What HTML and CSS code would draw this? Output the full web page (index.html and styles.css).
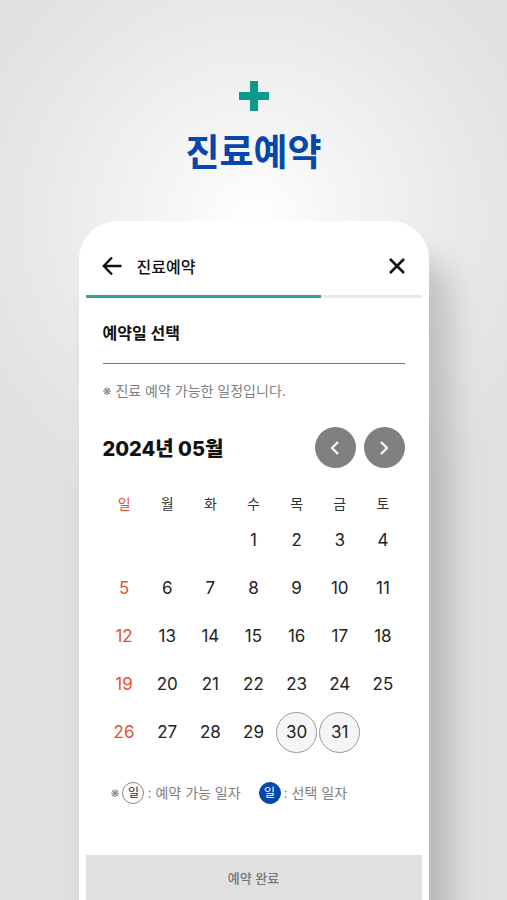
FILE: index.html
```
<!DOCTYPE html>
<html lang="ko">
<head>
  <meta charset="utf-8">
  <meta name="viewport" content="width=device-width, initial-scale=1">
  <title>진료예약</title>
  <link rel="stylesheet" href="styles.css">
</head>
<body>
  <div class="page">
    <header class="hero">
      <svg class="hero-icon" viewBox="0 0 30 30" aria-hidden="true">
        <path d="M11 0h8v11h11v8H19v11h-8V19H0v-8h11z" fill="#0a9b8e"/>
      </svg>
      <h1 class="hero-title">진료예약</h1>
    </header>

    <main class="phone">
      <div class="topbar">
        <button class="icon-btn" type="button" aria-label="뒤로">
          <svg width="20" height="20" viewBox="0 0 20 20" fill="none" stroke="#111" stroke-width="2.4">
            <path d="M19.5 10H2M10 1.5L1.8 10l8.2 8.5"/>
          </svg>
        </button>
        <h2 class="topbar-title">진료예약</h2>
        <button class="icon-btn" type="button" aria-label="닫기">
          <svg width="16" height="16" viewBox="0 0 16 16" fill="none" stroke="#111" stroke-width="2.6">
            <path d="M1 1l14 14M15 1L1 15"/>
          </svg>
        </button>
      </div>
      <div class="progress"><div class="progress-bar" style="width: 70%"></div></div>

      <section class="content">
        <h3 class="section-title">예약일 선택</h3>
        <p class="note">※ 진료 예약 가능한 일정입니다.</p>

        <div class="month">
          <h3 class="month-title">2024년 05월</h3>
          <button class="month-btn" type="button" aria-label="이전 달">
            <svg width="14" height="14" viewBox="0 0 14 14" fill="none" stroke="#fff" stroke-width="2.2">
              <path d="M10 1L4 7l6 6"/>
            </svg>
          </button>
          <button class="month-btn" type="button" aria-label="다음 달">
            <svg width="14" height="14" viewBox="0 0 14 14" fill="none" stroke="#fff" stroke-width="2.2">
              <path d="M4 1l6 6-6 6"/>
            </svg>
          </button>
        </div>

        <table class="calendar">
          <thead>
            <tr><th>일</th><th>월</th><th>화</th><th>수</th><th>목</th><th>금</th><th>토</th></tr>
          </thead>
          <tbody>
            <tr><td></td><td></td><td></td><td>1</td><td>2</td><td>3</td><td>4</td></tr>
            <tr><td>5</td><td>6</td><td>7</td><td>8</td><td>9</td><td>10</td><td>11</td></tr>
            <tr><td>12</td><td>13</td><td>14</td><td>15</td><td>16</td><td>17</td><td>18</td></tr>
            <tr><td>19</td><td>20</td><td>21</td><td>22</td><td>23</td><td>24</td><td>25</td></tr>
            <tr>
              <td>26</td><td>27</td><td>28</td><td>29</td>
              <td><button class="day" type="button">30</button></td>
              <td><button class="day" type="button">31</button></td>
              <td></td>
            </tr>
          </tbody>
        </table>

        <div class="legend">
          <span class="legend-item">※ <span class="dot">일</span> : 예약 가능 일자</span>
          <span class="legend-item"><span class="dot dot-selected">일</span> : 선택 일자</span>
        </div>
      </section>

      <button class="submit" type="button" disabled>예약 완료</button>
    </main>
  </div>
</body>
</html>
```
FILE: styles.css
```
* {
  box-sizing: border-box;
}
body {
  margin: 0;
  font-family: Inter, "Noto Sans CJK KR", sans-serif;
  color: #111;
}
h1, h2, h3, p {
  margin: 0;
}
button {
  padding: 0;
  border: none;
  font-family: inherit;
  cursor: pointer;
}
.page {
  display: flex;
  flex-direction: column;
  min-height: 100vh;
  overflow: hidden;
  background: radial-gradient(circle at 50% 220px, #fff 0, #f7f7f7 70px, #efefef 150px, #e8e8e8 220px, #e0e0e0 320px);
}

/* Hero */
.hero {
  display: flex;
  flex-direction: column;
  align-items: center;
  gap: 14px;
  padding: 81px 20px 40px;
}
.hero-icon {
  width: 30px;
  height: 30px;
}
.hero-title {
  font-size: 37px;
  line-height: 56px;
  font-weight: 700;
  color: #0647a9;
}

/* Phone */
.phone {
  display: flex;
  flex-direction: column;
  flex: 1;
  width: calc(100% - 40px);
  max-width: 350px;
  margin: 0 auto;
  padding: 0 7px;
  background: #fff;
  border-radius: 38px 38px 0 0;
  box-shadow: 22px 36px 32px rgba(0, 0, 0, 0.18);
}
.topbar {
  display: flex;
  align-items: center;
  padding: 16px 17px 0 16px;
  height: 74px;
}
.topbar-title {
  flex: 1;
  padding-left: 15px;
  font-size: 16px;
  font-weight: 500;
}
.icon-btn {
  display: flex;
  background: none;
}
.progress {
  height: 3px;
  background: #e9e9e9;
}
.progress-bar {
  height: 3px;
  background: #35a39b;
}
.content {
  padding: 0 17px;
}
.section-title {
  padding: 23px 0 18px;
  border-bottom: 1px solid #777;
  font-size: 16px;
  line-height: 24px;
  font-weight: 700;
}
.note {
  padding: 15px 0;
  font-size: 14px;
  line-height: 24px;
  color: #808080;
}

/* Calendar */
.month {
  display: flex;
  align-items: center;
  gap: 8px;
  padding-top: 9px;
}
.month-title {
  flex: 1;
  font-size: 20px;
  font-weight: 800;
}
.month-btn {
  display: flex;
  align-items: center;
  justify-content: center;
  width: 41px;
  height: 41px;
  border-radius: 50%;
  background: #808080;
}
.calendar {
  width: 100%;
  margin-top: 24px;
  border-collapse: collapse;
  table-layout: fixed;
  text-align: center;
}
.calendar th {
  height: 24px;
  padding: 0;
  font-size: 14px;
  line-height: 24px;
  font-weight: 400;
  color: #333;
}
.calendar td {
  height: 48px;
  padding: 0;
  font-size: 17px;
  color: #222;
}
.calendar th:first-child,
.calendar td:first-child {
  color: #e8502f;
}
.day {
  width: 41px;
  height: 41px;
  border: 1px solid #999;
  border-radius: 50%;
  background: #f5f5f5;
  font-size: 17px;
  color: #222;
}
.legend {
  display: flex;
  gap: 18px;
  padding: 26px 8px;
  font-size: 14px;
  line-height: 22px;
  color: #808080;
  white-space: nowrap;
}
.legend-item {
  display: flex;
  align-items: center;
  gap: 3px;
}
.dot {
  display: flex;
  align-items: center;
  justify-content: center;
  width: 22px;
  height: 22px;
  border: 1px solid #888;
  border-radius: 50%;
  font-size: 12px;
  color: #222;
}
.dot-selected {
  border-color: #0647a9;
  background: #0647a9;
  color: #fff;
}
.submit {
  height: 45px;
  margin-top: auto;
  background: #e0e0e0;
  font-size: 13px;
  font-weight: 500;
  color: #777;
}
```
